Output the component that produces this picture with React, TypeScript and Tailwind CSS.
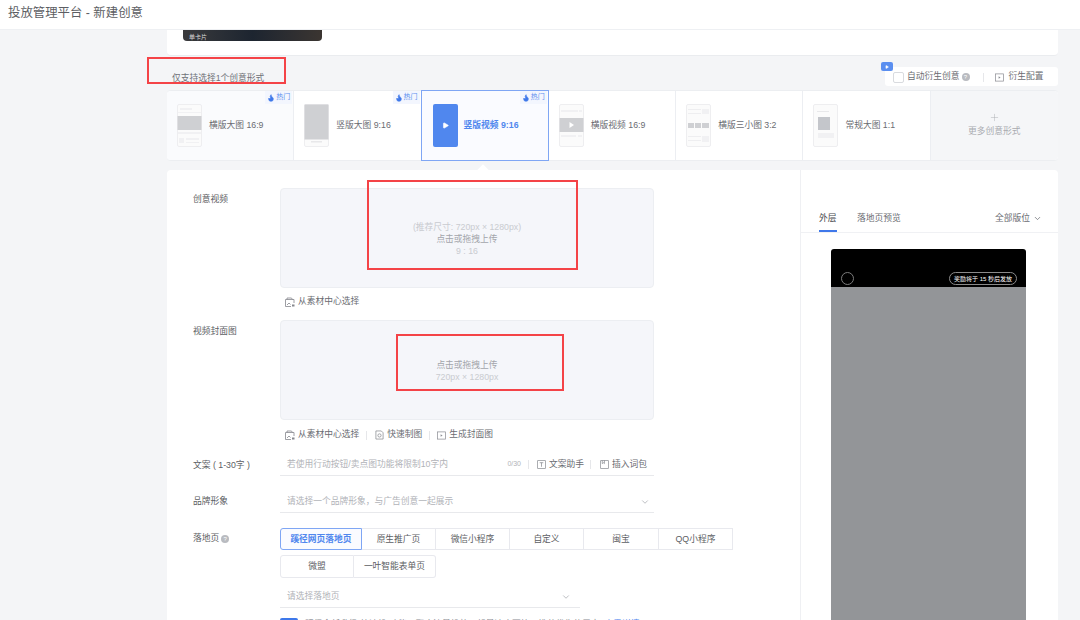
import { ChevronDown, Flame, Plus, Play } from "lucide-react"

const formats = [
  { name: "横版大图 16:9", hot: true, thumb: "wide" },
  { name: "竖版大图 9:16", hot: true, thumb: "tall" },
  { name: "竖版视频 9:16", hot: true, thumb: "active" },
  { name: "横版视频 16:9", hot: false, thumb: "video" },
  { name: "横版三小图 3:2", hot: false, thumb: "three" },
  { name: "常规大图 1:1", hot: false, thumb: "square" },
]

const pageTypes = [
  { name: "蹊径网页落地页", w: "w-[82px]" },
  { name: "原生推广页", w: "w-[74px]" },
  { name: "微信小程序", w: "w-[74px]" },
  { name: "自定义", w: "w-[74px]" },
  { name: "闽宝", w: "w-[75px]" },
  { name: "QQ小程序", w: "w-[74px]" },
]

function Thumb({ kind }: { kind: string }) {
  if (kind === "active") {
    return (
      <div className="flex h-[43px] w-[25px] shrink-0 items-center justify-center rounded-[2px] bg-[#5087ee]">
        <Play className="h-[7px] w-[7px] fill-white text-white" />
      </div>
    )
  }
  return (
    <svg viewBox="0 0 25 43" className="h-[43px] w-[25px] shrink-0">
      <rect x="0.5" y="0.5" width="24" height="42" rx="1.5" fill="#fbfbfb" stroke="#eeeef0" />
      {kind === "wide" && (
        <>
          <rect x="3" y="4" width="12" height="2" fill="#f1f1f3" />
          <rect x="1" y="8" width="23" height="1" fill="#f1f1f3" />
          <rect x="0.5" y="12" width="24" height="14" fill="#cfd0d3" />
          <rect x="1" y="28" width="23" height="2" fill="#f1f1f3" />
          <rect x="2" y="34" width="5" height="5" fill="#f1f1f3" />
          <rect x="9" y="34" width="13" height="2" fill="#f1f1f3" />
          <rect x="9" y="38" width="13" height="1" fill="#f1f1f3" />
        </>
      )}
      {kind === "tall" && (
        <>
          <rect x="0.5" y="0.5" width="24" height="35" fill="#cfd0d3" />
          <rect x="7" y="37" width="11" height="1.5" fill="#e8e8ea" />
        </>
      )}
      {kind === "video" && (
        <>
          <rect x="2" y="6" width="17" height="2" fill="#f1f1f3" />
          <rect x="20" y="6" width="3" height="2" fill="#f1f1f3" />
          <rect x="0.5" y="14" width="24" height="14" fill="#cfd0d3" />
          <path d="M10.5 18l4.5 3-4.5 3z" fill="#fff" />
          <rect x="2" y="31" width="15" height="2" fill="#f1f1f3" />
          <rect x="19" y="31" width="4" height="2" fill="#f1f1f3" />
        </>
      )}
      {kind === "three" && (
        <>
          <rect x="2" y="5" width="13" height="1" fill="#eeeef0" />
          <rect x="2" y="9" width="13" height="1" fill="#eeeef0" />
          <rect x="16" y="5" width="7" height="5" fill="#f1f1f3" />
          <rect x="2" y="19" width="6" height="5" fill="#cfd0d3" />
          <rect x="9" y="19" width="6" height="5" fill="#cfd0d3" />
          <rect x="16" y="19" width="7" height="5" fill="#cfd0d3" />
          <rect x="2" y="32" width="13" height="1" fill="#eeeef0" />
          <rect x="2" y="36" width="13" height="1" fill="#eeeef0" />
          <rect x="16" y="32" width="7" height="6" fill="#f1f1f3" />
        </>
      )}
      {kind === "square" && (
        <>
          <rect x="4" y="7" width="12" height="1" fill="#e8e8ea" />
          <rect x="5" y="13" width="12" height="13" fill="#c4c6cb" />
          <rect x="5" y="29" width="16" height="5" fill="#f1f1f3" />
        </>
      )}
    </svg>
  )
}

function FolderIcon() {
  return (
    <svg viewBox="0 0 10 10" className="h-[10px] w-[10px] shrink-0" fill="none" stroke="#85878d" strokeWidth="0.8">
      <path d="M2 2.5V1h4.5l1 1.5" />
      <path d="M.5 2.5H9V6M.5 2.5v7H6" />
      <path d="M2 8l2-2 1.5 1.5" />
      <path d="M7 7.5h2.5v2H7z" fill="#85878d" stroke="none" />
    </svg>
  )
}

function FileIcon() {
  return (
    <svg viewBox="0 0 10 10" className="h-[10px] w-[9px] shrink-0" fill="none" stroke="#85878d" strokeWidth="0.8">
      <path d="M1 .5h6L9 2.5v7H1z" />
      <circle cx="5" cy="5.5" r="1.8" />
    </svg>
  )
}

function CoverIcon() {
  return (
    <svg viewBox="0 0 10 10" className="h-[9px] w-[9px] shrink-0" fill="none" stroke="#8b8d93" strokeWidth="0.8">
      <rect x="0.5" y="1" width="9" height="8" />
      <path d="M4 3.5l2.2 1.5L4 6.5z" fill="#8b8d93" stroke="none" />
    </svg>
  )
}

function TextIcon() {
  return (
    <svg viewBox="0 0 10 10" className="h-[9px] w-[9px] shrink-0" fill="none" stroke="#85878d" strokeWidth="0.8">
      <rect x="0.5" y="0.5" width="9" height="9" rx="0.5" />
      <path d="M3 3h4M5 3v4.5" />
    </svg>
  )
}

function WordIcon() {
  return (
    <svg viewBox="0 0 10 10" className="h-[9px] w-[9px] shrink-0" fill="none" stroke="#85878d" strokeWidth="0.8">
      <rect x="0.5" y="0.5" width="9" height="9" rx="0.5" />
      <path d="M2.5 .5v3.5l1.2-1 1.2 1V.5" />
    </svg>
  )
}

function HelpDot() {
  return (
    <span className="flex h-[8px] w-[8px] shrink-0 items-center justify-center rounded-full bg-[#b9bbc0] text-[6px] leading-none text-white">
      ?
    </span>
  )
}

function Divider() {
  return <span className="block h-[9px] w-px bg-[#e6e7ea]" />
}

function UploadBox({ lines }: { lines: { text: string; dark?: boolean }[] }) {
  return (
    <div className="flex h-[100px] flex-col items-center justify-center rounded-[4px] border border-[#eceef2] bg-[#f5f6fa] pt-[2px] leading-[12px]">
      {lines.map((line) => (
        <div key={line.text} className={line.dark ? "text-[#a3a5ab]" : "text-[#c9cbd0]"}>
          {line.text}
        </div>
      ))}
    </div>
  )
}

export default function App() {
  return (
    <div className="relative h-[620px] w-[1080px] overflow-hidden bg-[#f4f5f7] font-['Liberation_Sans','Noto_Sans_CJK_SC',sans-serif] text-[8.75px] text-[#6a6c72]">
      <header className="flex h-[30px] items-center border-b border-[#eef0f3] bg-white pb-[2px] pl-[8px] text-[12.4px] text-[#5c5e63]">
        投放管理平台 - 新建创意
      </header>

      <div className="ml-[167px] w-[891px]">
        <div className="h-[26px] rounded-b-[4px] border-b border-[#eaecef] bg-white pl-[16px]">
          <div className="flex h-[11px] w-[139px] items-end rounded-b-[4px] bg-gradient-to-r from-[#3a3a3c] via-[#1d2530] to-[#3b3531] pb-px pl-[6px] text-[6px] leading-none text-[#d8d8d8]">
            单卡片
          </div>
        </div>

        <div className="flex h-[34px] items-end justify-between pb-[4px]">
          <div className="pb-[2px] pl-[5px] leading-[12px] text-[#6f7177]">仅支持选择1个创意形式</div>
          <div className="relative flex h-[19px] w-[173px] items-center rounded-[3px] bg-white pl-[8px] pt-px">
            <div className="absolute -left-[4px] -top-[5px] flex h-[9px] w-[12px] items-center justify-center rounded-[2px] bg-[#5b8ff0]">
              <Play className="h-[4px] w-[4px] fill-white text-white" />
            </div>
            <span className="h-[11px] w-[11px] rounded-[2px] border border-[#d9dbdf] bg-white" />
            <span className="ml-[3px]">自动衍生创意</span>
            <span className="ml-[2px]">
              <HelpDot />
            </span>
            <span className="ml-[13px]">
              <Divider />
            </span>
            <span className="ml-[11px]">
              <CoverIcon />
            </span>
            <span className="ml-[5px]">衍生配置</span>
          </div>
        </div>

        <div className="grid h-[71px] grid-cols-7 rounded-[4px] border-y border-[#eceef1] bg-white">
          {formats.map((f, i) => {
            const active = f.thumb === "active"
            return (
              <div
                key={f.name}
                className={
                  active
                    ? "relative -my-px -ml-px flex items-center gap-[6px] border border-[#7fa6f4] bg-[#fafbff] pl-[11px] font-bold text-[#5087ee]"
                    : i === 0
                      ? "relative flex items-center gap-[7px] rounded-l-[4px] border-r border-[#eceef2] bg-[#fafbfd] pl-[10px]"
                      : "relative flex items-center gap-[7px] border-r border-[#eceef2] pl-[10px]"
                }
              >
                {f.hot && (
                  <div className="absolute right-px top-0 flex h-[13px] items-center gap-px bg-[#f3f6fe] px-[2px] text-[7px] font-normal text-[#5c8eee]">
                    <Flame className="h-[8px] w-[8px] fill-[#3f78ea] text-[#3f78ea]" />
                    热门
                  </div>
                )}
                <Thumb kind={f.thumb} />
                <span className="whitespace-nowrap">{f.name}</span>
              </div>
            )
          })}
          <div className="flex flex-col items-center rounded-r-[4px] bg-[#f5f6f8] pt-[21px] text-[#a9abb0]">
            <Plus className="h-[11px] w-[11px]" strokeWidth={1} />
            <span className="mt-[2px] leading-[12px]">更多创意形式</span>
          </div>
        </div>

        <div className="relative mt-[9px] flex h-[460px] rounded-[4px] bg-white">
          <div className="absolute -top-[4px] left-[312px] h-[8px] w-[8px] rotate-45 bg-white" />

          <div className="w-[633px] pl-[26px] pt-[18px]">
            <div className="flex">
              <div className="w-[87px] pt-[5px] leading-[12px] text-[#5c5e63]">创意视频</div>
              <div className="w-[374px]">
                <UploadBox
                  lines={[
                    { text: "(推荐尺寸: 720px × 1280px)" },
                    { text: "点击或拖拽上传", dark: true },
                    { text: "9 : 16" },
                  ]}
                />
                <div className="flex h-[24px] items-center gap-[3px] pl-[5px] pt-[4px]">
                  <FolderIcon />
                  <span>从素材中心选择</span>
                </div>
              </div>
            </div>

            <div className="mt-[8px] flex">
              <div className="w-[87px] pt-[5px] leading-[12px] text-[#5c5e63]">视频封面图</div>
              <div className="w-[374px]">
                <UploadBox
                  lines={[{ text: "点击或拖拽上传", dark: true }, { text: "720px × 1280px" }]}
                />
                <div className="flex h-[26px] items-center pl-[5px] pt-[4px]">
                  <FolderIcon />
                  <span className="ml-[3px]">从素材中心选择</span>
                  <span className="ml-[7px]">
                    <Divider />
                  </span>
                  <span className="ml-[8px]">
                    <FileIcon />
                  </span>
                  <span className="ml-[3px]">快速制图</span>
                  <span className="ml-[7px]">
                    <Divider />
                  </span>
                  <span className="ml-[7px]">
                    <CoverIcon />
                  </span>
                  <span className="ml-[3px]">生成封面图</span>
                </div>
              </div>
            </div>

            <div className="mt-[8px] flex">
              <div className="flex w-[87px] items-center pt-[1px] text-[#5c5e63]">文案 ( 1-30字 )</div>
              <div className="flex h-[22px] w-[374px] items-center border-b border-[#e8e9ec] pl-[7px]">
                <span className="text-[#b1b3b8]">若使用行动按钮/卖点图功能将限制10字内</span>
                <span className="ml-auto text-[7px] text-[#b1b3b8]">0/30</span>
                <span className="ml-[7px]">
                  <Divider />
                </span>
                <span className="ml-[8px]">
                  <TextIcon />
                </span>
                <span className="ml-[3px]">文案助手</span>
                <span className="ml-[6px]">
                  <Divider />
                </span>
                <span className="ml-[9px]">
                  <WordIcon />
                </span>
                <span className="ml-[3px] mr-[7px]">插入词包</span>
              </div>
            </div>

            <div className="mt-[15px] flex">
              <div className="flex w-[87px] items-center text-[#5c5e63]">品牌形象</div>
              <div className="flex h-[22px] w-[374px] items-center justify-between border-b border-[#e8e9ec] pl-[7px] pr-[4px]">
                <span className="text-[#b1b3b8]">请选择一个品牌形象，与广告创意一起展示</span>
                <ChevronDown className="h-[10px] w-[10px] text-[#b1b3b8]" />
              </div>
            </div>

            <div className="mt-[15px] flex">
              <div className="flex h-[22px] w-[87px] items-center gap-[2px] text-[#5c5e63]">
                落地页
                <HelpDot />
              </div>
              <div>
                <div className="flex h-[22px] w-[453px]">
                  {pageTypes.map((p, i) => (
                    <div
                      key={p.name}
                      className={
                        i === 0
                          ? `${p.w} flex items-center justify-center rounded-l-[3px] border border-[#7fa6f4] bg-[#fafbff] pt-px font-bold text-[#5087ee]`
                          : `${p.w} flex items-center justify-center border border-l-0 border-[#e8e9ee] pt-px text-[#5c5e63]`
                      }
                    >
                      {p.name}
                    </div>
                  ))}
                </div>
                <div className="mt-[5px] flex h-[23px]">
                  <div className="flex w-[74px] items-center justify-center rounded-l-[3px] border border-[#e8e9ee] text-[#5c5e63]">
                    微盟
                  </div>
                  <div className="flex w-[82px] items-center justify-center rounded-r-[3px] border border-l-0 border-[#e8e9ee] text-[#5c5e63]">
                    一叶智能表单页
                  </div>
                </div>
                <div className="mt-[8px] flex h-[22px] w-[300px] items-center justify-between border-b border-[#e8e9ec] pl-[7px] pr-[9px]">
                  <span className="text-[#b1b3b8]">请选择落地页</span>
                  <ChevronDown className="h-[10px] w-[10px] text-[#b1b3b8]" />
                </div>
                <div className="mt-[10px] flex items-start whitespace-nowrap leading-[12px]">
                  <span className="h-[12px] w-[18px] rounded-[2px] bg-[#3d78ea] text-center text-[7px] text-white">NEW</span>
                  <span className="ml-[7px] text-[#8b8d93]">
                    蹊径全新升级“快速投”功能，聚合流量投放，起量速度更快，推荐优先使用它
                  </span>
                  <span className="ml-[5px] text-[#5087ee]">查看详情</span>
                </div>
              </div>
            </div>
          </div>

          <div className="flex-1 border-l border-[#eff0f3]">
            <div className="flex h-[63px] items-end border-b border-[#f0f1f4] pl-[18px] pr-[16px]">
              <div className="flex flex-col gap-[6px]">
                <span className="leading-[12px] text-[#45474c]">外层</span>
                <span className="h-[2px] w-[18px] bg-[#3f78ea]" />
              </div>
              <span className="ml-[20px] pb-[8px] leading-[12px]">落地页预览</span>
              <span className="ml-auto flex items-center gap-[3px] pb-[8px] leading-[12px]">
                全部版位
                <ChevronDown className="h-[9px] w-[9px]" />
              </span>
            </div>
            <div className="ml-[30px] mt-[16px] w-[195px]">
              <div className="flex h-[38px] items-end justify-between rounded-t-[3px] bg-black px-[10px] pb-[2px] pr-[9px]">
                <span className="h-[13px] w-[13px] rounded-full border border-[#7c7c7c]" />
                <span className="flex h-[13px] items-center whitespace-nowrap rounded-full border border-[#8a8a8a] px-[4px] text-[6px] leading-none text-white">
                  奖励将于 15 秒后发放
                </span>
              </div>
              <div className="h-[400px] bg-[#939598]" />
            </div>
          </div>
        </div>
      </div>

      <div className="absolute left-[147px] top-[57px] h-[27px] w-[139px] border-2 border-[#f44347]" />
      <div className="absolute left-[367px] top-[180px] h-[90px] w-[211px] border-2 border-[#f44347]" />
      <div className="absolute left-[396px] top-[334px] h-[57px] w-[168px] border-2 border-[#f44347]" />
    </div>
  )
}
